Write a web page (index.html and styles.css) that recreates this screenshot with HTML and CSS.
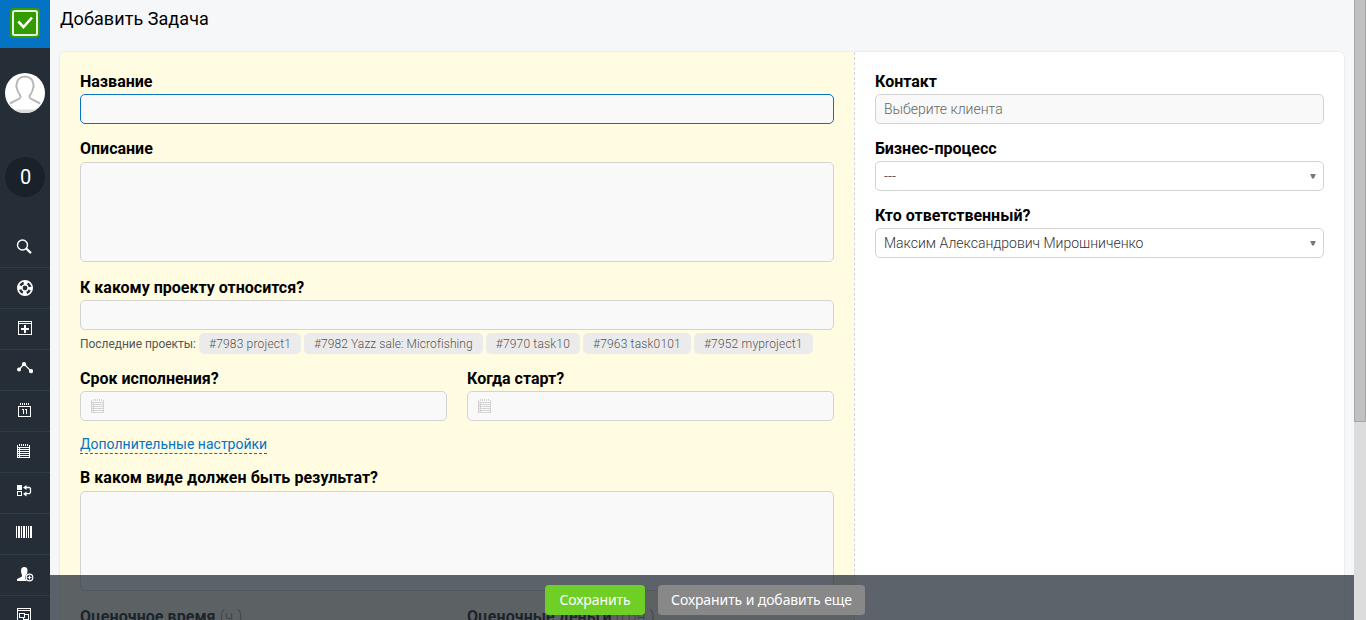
FILE: index.html
```html
<!DOCTYPE html>
<html lang="ru">
<head>
<meta charset="utf-8">
<title>Добавить Задача</title>
<link rel="stylesheet" href="styles.css">
</head>
<body>
<svg width="0" height="0" class="defs" aria-hidden="true">
  <symbol id="list" viewBox="0 0 14 15" shape-rendering="crispEdges">
    <path fill="currentColor" d="M2 0h1v2h-1zM4 0h1v2h-1zM6 0h1v2h-1zM8 0h1v2h-1zM10 0h1v2h-1zM0 1h1v13H0zM12 1h1v13h-1zM0 13h13v1H0zM2 3h1v10H2zM1 3h11v1H1zM1 5h11v1H1zM1 7h11v1H1zM1 9h11v1H1zM1 11h11v1H1z"/>
  </symbol>
</svg>
<div class="app">
  <nav class="sidebar">
    <div class="logo">
      <svg width="30" height="30" viewBox="0 0 30 30"><rect width="30" height="30" rx="4" fill="#339a00"/><rect x="3" y="3" width="24" height="24" rx="1.5" fill="none" stroke="#e3f0ec" stroke-width="2"/><path d="M8.300 13.500l5.200 5.500 8.500-9.500" fill="none" stroke="#fff" stroke-width="2.600"/></svg>
    </div>
    <div class="avatar">
      <svg width="40" height="40" viewBox="0 0 40 40"><circle cx="20" cy="20" r="20" fill="#fff"/><path d="M8.500 36.500h23Q27 40 20 40T8.500 36.500z" fill="#dcdcdc"/><path d="M4.800 30.500l9-4.500q3-2 .7-4.500-2.200-3-2.700-7l-.6-1 .8-3.500q.7-6 8-6.500 7.300.5 8 6.500l.8 3.500-.6 1q-.5 4-2.700 7-2.300 2.500.7 4.500l9 4.500" fill="none" stroke="#b9b9b9" stroke-width="2"/></svg>
    </div>
    <div class="counter">0</div>
    <ul class="menu">
      <li><svg width="16" height="16" viewBox="0 0 16 16" fill="none" stroke="#fff"><circle cx="6.500" cy="6" r="5" stroke-width="1.400"/><path d="M10.200 9.500l4.800 4.600" stroke-width="2.200"/></svg></li>
      <li><svg class="nudge" width="16" height="16" viewBox="0 0 16 16" fill="none" stroke="#fff"><circle cx="8" cy="8" r="7.200" stroke-width="1.600"/><circle cx="8" cy="8" r="5" stroke-width="4.400" stroke-dasharray="3.93 3.93" stroke-dashoffset="1.960"/><circle cx="8" cy="8" r="3.100" stroke-width="1.400"/></svg></li>
      <li><svg class="nudge up1" width="14" height="14" viewBox="0 0 14 14" fill="#fff" shape-rendering="crispEdges"><path d="M0 0h14v14H0zM1 1v1h12V1zM1 3v10h12V3z" fill-rule="evenodd"/><path d="M6 4h2v3h3v2H8v3H6V9H3V7h3z"/></svg></li>
      <li><svg class="nudge up2" width="16" height="12" viewBox="0 0 16 12"><path d="M2 7.500l5-5.500 7 7" fill="none" stroke="#fff" stroke-width="1.200"/><g fill="#fff"><circle cx="2" cy="7.500" r="2"/><circle cx="7" cy="2.200" r="2.100"/><circle cx="14" cy="9.200" r="2.100"/></g></svg></li>
      <li><svg class="up1" width="13" height="14" viewBox="0 0 13 14" fill="#fff" shape-rendering="crispEdges"><path d="M2 0h1v2H2zM4 0h1v2H4zM6 0h1v2H6zM8 0h1v2H8zM10 0h1v2h-1zM0 3h13v11H0zM1 4v9h11V4z" fill-rule="evenodd"/><path d="M4 6h2v5H5V7H4zM7 6h2v5H8V7H7z"/></svg></li>
      <li><svg class="up1" width="14" height="15"><use href="#list"/></svg></li>
      <li><svg class="up2" width="15" height="12" viewBox="0 0 15 12" fill="#fff"><path d="M0 0h5v5H0zM0 6h5v5H0zM1 7v3h3V7z" fill-rule="evenodd" shape-rendering="crispEdges"/><path d="M6 2.500L9.500 0v5zM6 9L9.500 6.500v5z"/><path d="M9 2.500h3.500l1 1v4l-1 1.200H9" fill="none" stroke="#fff" stroke-width="1.300"/></svg></li>
      <li><svg class="up2" width="16" height="12" viewBox="0 0 16 12" fill="#fff" shape-rendering="crispEdges"><path d="M0 0h1v12H0zM2 0h2v12H2zM5 0h1v12H5zM7 0h2v12H7zM10 0h1v12h-1zM12 0h1v12h-1zM14 0h2v12h-2z"/></svg></li>
      <li><svg class="nudge up1" width="17" height="15" viewBox="0 0 17 15"><path d="M0 14v-2l5-2.500V8Q4 6.500 4 3.500 4 0 7.300 0t3.200 3.500Q10.500 6.500 9.500 8v1.500L12 14z" fill="#fff"/><circle cx="12.500" cy="10.500" r="4.300" fill="#252e38"/><circle cx="12.500" cy="10.500" r="3.300" fill="none" stroke="#fff" stroke-width="1.200"/><path d="M12.500 8.500v4M10.500 10.500h4" stroke="#fff" stroke-width="1.200"/></svg></li>
      <li><svg class="up1" width="14" height="14" viewBox="0 0 14 14" fill="none" stroke="#fff" shape-rendering="crispEdges"><path d="M.5.500h13v13H.5zM.5 2.500h13M2.500 5.500h5v4h-5zM8 6.500h3.500v5h-5V10"/></svg></li>
    </ul>
  </nav>
  <main class="content">
    <h1>Добавить Задача</h1>
    <form class="card">
      <section class="primary">
        <label>Название</label>
        <div class="input focused"></div>
        <label>Описание</label>
        <div class="textarea"></div>
        <label>К какому проекту относится?</label>
        <div class="input project"></div>
        <div class="recent"><span class="caption">Последние проекты:</span><span class="tag">#7983 project1</span><span class="tag long">#7982 Yazz sale: Microfishing</span><span class="tag">#7970 task10</span><span class="tag">#7963 task0101</span><span class="tag">#7952 myproject1</span></div>
        <div class="pair">
          <div><label>Срок исполнения?</label><div class="input date"><svg width="14" height="15"><use href="#list"/></svg></div></div>
          <div><label>Когда старт?</label><div class="input date"><svg width="14" height="15"><use href="#list"/></svg></div></div>
        </div>
        <div class="more"><a>Дополнительные настройки</a></div>
        <label class="wide">В каком виде должен быть результат?</label>
        <div class="textarea"></div>
        <div class="pair">
          <label class="wide">Оценочное время <span class="unit">(ч.)</span></label>
          <label class="wide">Оценочные деньги <span class="unit">(грн.)</span></label>
        </div>
      </section>
      <section class="secondary">
        <label>Контакт</label>
        <div class="input placeholder">Выберите клиента</div>
        <label>Бизнес-процесс</label>
        <div class="input select"><span>---</span><i class="arrow"></i></div>
        <label>Кто ответственный?</label>
        <div class="input select"><span>Максим Александрович Мирошниченко</span><i class="arrow"></i></div>
      </section>
    </form>
    <footer class="actions">
      <span class="button save">Сохранить</span>
      <span class="button again">Сохранить и добавить еще</span>
    </footer>
  </main>
  <div class="scrollbar"><div class="thumb"></div></div>
</div>
</body>
</html>
```
FILE: styles.css
```css
* { box-sizing: border-box; }
body { margin: 0; font-family: Roboto, sans-serif; font-size: 14px; color: #000; }
.defs { position: absolute; }
.app { display: flex; height: 620px; overflow: hidden; background: #f5f7f9; }

.sidebar { width: 50px; flex: none; background: #252e37; display: flex; flex-direction: column; align-items: center; }
.logo { width: 50px; height: 48px; flex: none; background: #0473c4; display: flex; padding: 8px 10px; }
.avatar { height: 40px; margin-top: 25px; flex: none; }
.counter { width: 40px; height: 40px; flex: none; margin-top: 44px; padding-left: 1px; border-radius: 50%; background: #1a2129; color: #fff; font-size: 20px; line-height: 40px; text-align: center; }
.menu { list-style: none; margin: 30px 0 0; padding: 0; width: 50px; }
.menu li { height: 41px; border-bottom: 1px solid #313b46; display: flex; align-items: center; justify-content: center; padding-right: 2px; color: #fff; }
.menu .nudge { margin-left: 2px; }
.menu .up1 { margin-bottom: 2px; }
.menu .up2 { margin-bottom: 4px; }

.content { position: relative; flex: 1; height: 620px; padding: 0 10px; overflow: hidden; }
h1 { margin: 0; height: 52px; padding-top: 8px; font-size: 18px; line-height: 22px; font-weight: 400; letter-spacing: .07px; }
.card { display: flex; height: 700px; background: #fff; border-radius: 5px; box-shadow: 0 0 2px rgba(0, 0, 0, .15); }
.primary { width: 794px; flex: none; padding: 20px; background: #fffce2; border-radius: 5px 0 0 5px; }
.secondary { flex: 1; padding: 20px; border-left: 1px dashed #d3d3d3; }
label { display: block; height: 19px; margin-bottom: 3px; font-size: 16px; line-height: 20px; font-weight: 700; white-space: nowrap; }
.wide { letter-spacing: .05px; }
.input { height: 30px; margin-bottom: 15px; border: 1px solid #d3d3d3; border-radius: 5px; background: #f9f9f9; padding: 0 8px; font-size: 14px; line-height: 28px; font-weight: 300; color: #333; }
.focused { border-color: #0473c4; }
.placeholder { color: #666; }
.textarea { height: 100px; margin: 4px 0 16px; border: 1px solid #d3d3d3; border-radius: 5px; background: #f9f9f9; }
.project { margin-bottom: 3px; }
.recent { display: flex; gap: 3px; height: 21px; margin-bottom: 15px; font-size: 12px; line-height: 22px; white-space: nowrap; color: #555; }
.caption { width: 116px; letter-spacing: -.05px; }
.tag { padding: 0 10px; border-radius: 5px; background: #ebebeb; color: #555; font-weight: 300; letter-spacing: .18px; }
.long { letter-spacing: .08px; }
.pair { display: grid; grid-template-columns: 1fr 1fr; gap: 20px; }
.date { display: flex; padding: 7px 10px; color: #d3d3d3; }
.more { height: 32px; line-height: 16px; }
.more a { display: inline-block; height: 18px; color: #0473c4; border-bottom: 1px dashed #0473c4; }
.unit { font-weight: 300; color: #777; }
.select { display: flex; align-items: center; justify-content: space-between; background: #fff; padding-right: 7px; }
.arrow { width: 6px; height: 5px; background: #777; clip-path: polygon(0 0, 100% 0, 65% 100%, 35% 100%); }

.actions { position: absolute; left: 0; right: 0; bottom: 0; height: 45px; padding: 10px 0 0 6px; display: flex; justify-content: center; gap: 13px; background: rgba(38, 47, 57, .75); font-family: "Noto Sans", sans-serif; }
.button { height: 30px; border-radius: 4px; line-height: 30px; text-align: center; color: #fff; white-space: nowrap; letter-spacing: -.1px; }
.save { width: 100px; background: #6fcf27; }
.again { width: 207px; background: #888; }

.scrollbar { width: 12px; flex: none; background: #dcdcdc; }
.thumb { height: 422px; background: #c1c1c1; border: 1px solid #a6a6a6; border-top: 0; }
```
